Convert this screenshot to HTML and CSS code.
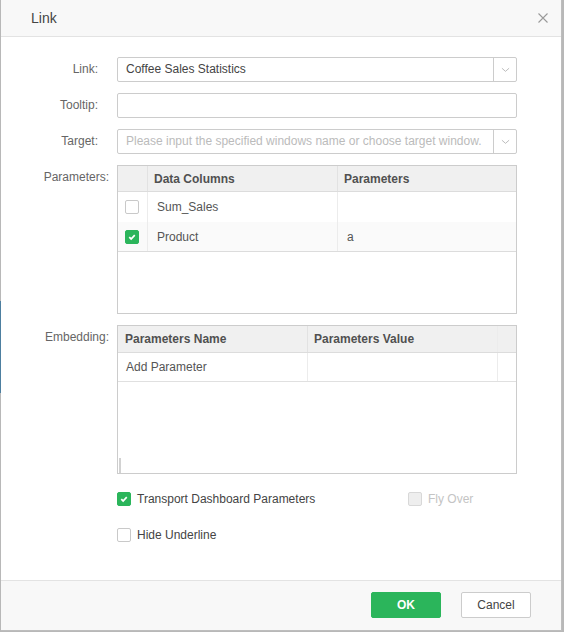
FILE: index.html
```html
<!DOCTYPE html>
<html lang="en">
<head>
  <meta charset="UTF-8">
  <title>Link</title>
  <link rel="stylesheet" href="styles.css">
</head>
<body>
<div class="backdrop-strip"></div>
<div class="dialog">
  <div class="dialog__header">
    <span class="dialog__title">Link</span>
    <svg class="dialog__close" viewBox="0 0 10 10">
      <path d="M0.5,0.5L9.5,9.5M9.5,0.5L0.5,9.5" />
    </svg>
  </div>

  <div class="dialog__body">
    <div class="form">
      <label class="form__label">Link:</label>
      <div class="select">
        <span class="select__value">Coffee Sales Statistics</span>
        <span class="select__arrow">
          <svg viewBox="0 0 10 6"><path d="M1,1L5,4.5L9,1" /></svg>
        </span>
      </div>

      <label class="form__label">Tooltip:</label>
      <div class="input"></div>

      <label class="form__label">Target:</label>
      <div class="select">
        <span class="select__value select__value--placeholder">Please input the specified windows name or choose target window.</span>
        <span class="select__arrow">
          <svg viewBox="0 0 10 6"><path d="M1,1L5,4.5L9,1" /></svg>
        </span>
      </div>

      <label class="form__label form__label--wide">Parameters:</label>
      <div class="grid grid--params">
        <div class="grid__row grid__row--head">
          <span class="grid__cell grid__cell--check"></span>
          <span class="grid__cell grid__cell--col">Data Columns</span>
          <span class="grid__cell grid__cell--param">Parameters</span>
        </div>
        <div class="grid__row">
          <span class="grid__cell grid__cell--check"><span class="checkbox"></span></span>
          <span class="grid__cell grid__cell--col">Sum_Sales</span>
          <span class="grid__cell grid__cell--param"></span>
        </div>
        <div class="grid__row grid__row--alt">
          <span class="grid__cell grid__cell--check">
            <span class="checkbox checkbox--on">
              <svg viewBox="0 0 14 14"><path d="M3.8,7.2L6,9.3L10.2,4.9" /></svg>
            </span>
          </span>
          <span class="grid__cell grid__cell--col">Product</span>
          <span class="grid__cell grid__cell--param">a</span>
        </div>
      </div>

      <label class="form__label form__label--wide">Embedding:</label>
      <div class="grid grid--embed">
        <div class="grid__row grid__row--head">
          <span class="grid__cell grid__cell--name">Parameters Name</span>
          <span class="grid__cell grid__cell--value">Parameters Value</span>
          <span class="grid__cell grid__cell--scroll"></span>
        </div>
        <div class="grid__row">
          <span class="grid__cell grid__cell--name">Add Parameter</span>
          <span class="grid__cell grid__cell--value"></span>
          <span class="grid__cell grid__cell--scroll"></span>
        </div>
        <span class="grid__hbar"></span>
      </div>

      <span></span>
      <div class="options">
        <div class="options__row">
          <label class="option">
            <span class="checkbox checkbox--on">
              <svg viewBox="0 0 14 14"><path d="M3.8,7.2L6,9.3L10.2,4.9" /></svg>
            </span>
            Transport Dashboard Parameters
          </label>
          <label class="option option--disabled">
            <span class="checkbox checkbox--disabled"></span>
            Fly Over
          </label>
        </div>
        <div class="options__row">
          <label class="option">
            <span class="checkbox"></span>
            Hide Underline
          </label>
        </div>
      </div>
    </div>
  </div>

  <div class="dialog__footer">
    <button class="btn btn--primary">OK</button>
    <button class="btn">Cancel</button>
  </div>
</div>
</body>
</html>
```

FILE: styles.css
```css
* {
  margin: 0;
  padding: 0;
  box-sizing: border-box;
}

:root {
  --color-border: #cccccc;
  --color-line: #e3e3e3;
  --color-green: #2bb55b;
  --color-text: #444444;
  --color-label: #666666;
}

body {
  position: relative;
  height: 632px;
  overflow: hidden;
  background: #b8b8b8;
  font-family: "Liberation Sans", Arial, sans-serif;
  font-size: 12px;
  color: var(--color-text);
}

.backdrop-strip {
  position: absolute;
  left: 0;
  top: 301px;
  width: 1px;
  height: 92px;
  background: #4d7fa0;
}

.dialog {
  margin-left: 1px;
  width: 561px;
  height: 631px;
  display: flex;
  flex-direction: column;
  background: #ffffff;
  border-right: 1px solid #bdbdbd;
  border-bottom: 1px solid #bdbdbd;
}

.dialog__header {
  height: 37px;
  flex: none;
  display: flex;
  align-items: center;
  justify-content: space-between;
  padding: 0 13px 1px 30px;
  background: #f8f8f8;
  border-bottom: 1px solid var(--color-line);
}

.dialog__title {
  font-size: 14px;
  color: #444;
}

.dialog__close {
  width: 10px;
  height: 10px;
  fill: none;
  stroke: #9a9a9a;
  stroke-width: 1.1;
}

.dialog__body {
  flex: 1;
}

.form {
  display: grid;
  grid-template-columns: 97px 400px;
  column-gap: 19px;
  row-gap: 11px;
  padding-top: 20px;
}

.form__label {
  text-align: right;
  line-height: 25px;
  color: var(--color-label);
  white-space: nowrap;
}

.form__label--wide {
  margin-right: -11px;
}

.input,
.select {
  height: 25px;
  border: 1px solid var(--color-border);
  border-radius: 2px;
  background: #fff;
}

.select {
  display: flex;
}

.select__value {
  flex: 1;
  padding-left: 8px;
  line-height: 23px;
  white-space: nowrap;
  overflow: hidden;
  color: var(--color-text);
}

.select__value--placeholder {
  color: #bbbbbb;
}

.select__arrow {
  width: 23px;
  flex: none;
  display: flex;
  align-items: center;
  justify-content: center;
  border-left: 1px solid var(--color-border);
}

.select__arrow svg {
  width: 9px;
  height: 6px;
  fill: none;
  stroke: #b5b5b5;
  stroke-width: 1;
}

.grid {
  position: relative;
  height: 149px;
  border: 1px solid var(--color-border);
  color: #555;
}

.grid__row {
  display: flex;
}

.grid__row--head {
  background: #f0f0f0;
  border-bottom: 1px solid #dcdcdc;
  font-weight: bold;
  color: #505050;
}

.grid__row--alt {
  background: #fafafa;
}

.grid__cell {
  display: flex;
  align-items: center;
  white-space: nowrap;
}

.grid--params .grid__row {
  height: 30px;
}

.grid--params .grid__row--head {
  height: 26px;
}

.grid--params .grid__row:last-child {
  border-bottom: 1px solid #dcdcdc;
}

.grid__cell--check {
  width: 30px;
  flex: none;
  padding-left: 7px;
  border-right: 1px solid #ececec;
}

.grid__cell--col {
  width: 190px;
  flex: none;
  padding-left: 9px;
  border-right: 1px solid #ececec;
}

.grid__cell--param {
  flex: 1;
  padding-left: 9px;
}

.grid__row--head .grid__cell--col,
.grid__row--head .grid__cell--param {
  padding-left: 6px;
}

.grid__row--head .grid__cell--check,
.grid__row--head .grid__cell--col {
  border-right-color: #e2e2e2;
}

.grid--embed .grid__row {
  height: 29px;
  border-bottom: 1px solid #e0e0e0;
}

.grid--embed .grid__row--head {
  height: 27px;
  border-bottom: 1px solid #dcdcdc;
}

.grid__cell--name {
  width: 190px;
  flex: none;
  padding-left: 8px;
  border-right: 1px solid #ececec;
}

.grid__row--head .grid__cell--name {
  padding-left: 7px;
  border-right-color: #e2e2e2;
}

.grid__cell--value {
  width: 190px;
  flex: none;
  padding-left: 6px;
  border-right: 1px solid #ececec;
}

.grid__cell--scroll {
  flex: 1;
}

.grid__hbar {
  position: absolute;
  left: 1px;
  bottom: 0;
  width: 2px;
  height: 15px;
  background: #d2d2d2;
}

.checkbox {
  width: 14px;
  height: 14px;
  flex: none;
  display: inline-flex;
  align-items: center;
  justify-content: center;
  border: 1px solid #c9c9c9;
  border-radius: 2px;
  background: #fff;
}

.checkbox svg {
  width: 14px;
  height: 14px;
  fill: none;
  stroke: #fff;
  stroke-width: 2;
}

.checkbox--on {
  border-color: var(--color-green);
  background: var(--color-green);
}

.checkbox--disabled {
  border-color: #d8d8d8;
  background: #eeeeee;
}

.options {
  display: flex;
  flex-direction: column;
  gap: 16px;
  padding-top: 4px;
}

.options__row {
  height: 20px;
  display: flex;
  align-items: center;
}

.option {
  display: flex;
  align-items: center;
  gap: 6px;
  color: var(--color-text);
}

.option:first-child {
  width: 291px;
}

.option--disabled {
  color: #c4c4c4;
}

.dialog__footer {
  height: 50px;
  flex: none;
  display: flex;
  justify-content: flex-end;
  gap: 20px;
  padding: 11px 30px 0 0;
  background: #f8f8f8;
  border-top: 1px solid var(--color-line);
}

.btn {
  width: 70px;
  height: 26px;
  border: 1px solid var(--color-border);
  border-radius: 2px;
  background: #fff;
  font-family: inherit;
  font-size: 12px;
  color: #444;
  cursor: pointer;
}

.btn--primary {
  border-color: var(--color-green);
  background: var(--color-green);
  color: #fff;
  font-weight: bold;
}
```
